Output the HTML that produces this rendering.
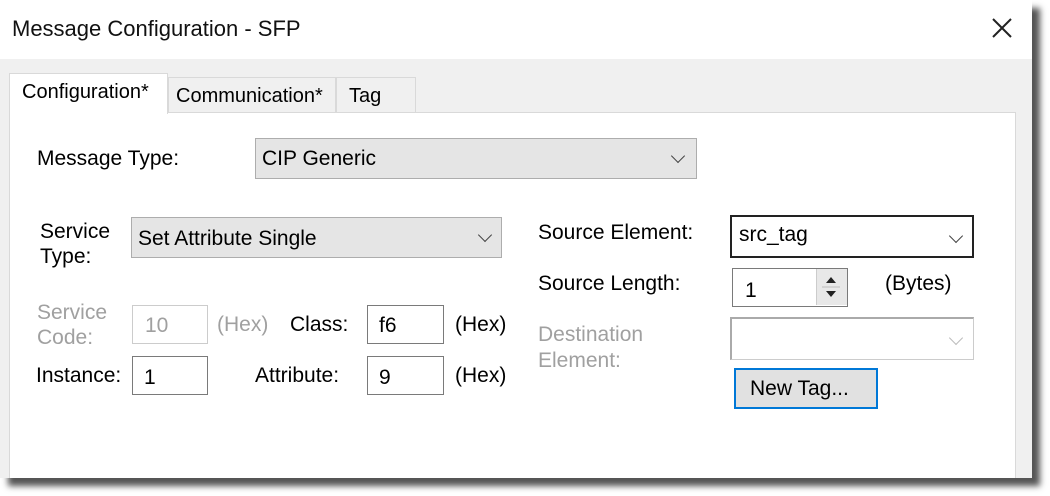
<!DOCTYPE html>
<html><head><style>
body{margin:0;width:1050px;height:496px;background:#fff;position:relative;overflow:hidden;font-family:"Liberation Sans",sans-serif;font-size:21px;color:#000}
.a{position:absolute;white-space:nowrap}
.box{position:absolute;box-sizing:border-box;background:#fff;border:1px solid #7a7a7a}
.cmb{position:absolute;box-sizing:border-box;background:#e5e5e5;border:1px solid #adadad}
.g{color:#a0a0a0}
.chev{position:absolute;width:9px;height:9px;border-right:1.5px solid #444;border-bottom:1.5px solid #444;transform:rotate(45deg)}
</style></head><body>
<div class="a" style="left:0;top:0;width:1032px;height:478px;background:#fff;box-shadow:8px 8px 6px #555"></div>
<div class="a" style="left:0;top:59px;width:1032px;height:419px;background:#f0f0f0"></div>
<div class="a" style="left:12px;top:16px;font-size:22px;color:#111">Message Configuration - SFP</div>
<svg class="a" style="left:991px;top:17px" width="22" height="22"><path d="M2 2L20 20M20 2L2 20" stroke="#222" stroke-width="2"/></svg>
<div class="a" style="left:9px;top:112px;width:1007px;height:366px;background:#fff;border:1px solid #d9d9d9;box-sizing:border-box;border-bottom:none"></div>
<div class="a" style="left:168px;top:77px;width:168px;height:36px;background:#f0f0f0;border:1px solid #d9d9d9;box-sizing:border-box"></div>
<div class="a" style="left:336px;top:77px;width:80px;height:36px;background:#f0f0f0;border:1px solid #d9d9d9;box-sizing:border-box"></div>
<div class="a" style="left:9px;top:73px;width:159px;height:41px;background:#fff;border:1px solid #d9d9d9;border-bottom:none;box-sizing:border-box"></div>
<div class="a" style="left:22px;top:81px;font-size:20px">Configuration*</div>
<div class="a" style="left:176px;top:85px;font-size:20px">Communication*</div>
<div class="a" style="left:349px;top:85px;font-size:20px">Tag</div>

<div class="a" style="left:37px;top:147px">Message Type:</div>
<div class="cmb" style="left:255px;top:138px;width:442px;height:41px"></div>
<div class="a" style="left:262px;top:147px">CIP Generic</div>
<div class="chev" style="left:673px;top:151px"></div>

<div class="a" style="left:40px;top:219px;line-height:25px">Service<br>Type:</div>
<div class="cmb" style="left:131px;top:217px;width:371px;height:41px"></div>
<div class="a" style="left:138px;top:227px">Set Attribute Single</div>
<div class="chev" style="left:480px;top:230px"></div>

<div class="a g" style="left:37px;top:300px;line-height:25px">Service<br>Code:</div>
<div class="box" style="left:132px;top:305px;width:76px;height:39px;border-color:#ccc"></div>
<div class="a g" style="left:145px;top:314px">10</div>
<div class="a g" style="left:217px;top:313px">(Hex)</div>
<div class="a" style="left:290px;top:313px">Class:</div>
<div class="box" style="left:367px;top:305px;width:77px;height:39px"></div>
<div class="a" style="left:379px;top:314px">f6</div>
<div class="a" style="left:455px;top:313px">(Hex)</div>

<div class="a" style="left:36px;top:364px">Instance:</div>
<div class="box" style="left:132px;top:356px;width:76px;height:39px"></div>
<div class="a" style="left:144px;top:366px">1</div>
<div class="a" style="left:255px;top:364px">Attribute:</div>
<div class="box" style="left:367px;top:356px;width:77px;height:39px"></div>
<div class="a" style="left:379px;top:366px">9</div>
<div class="a" style="left:455px;top:364px">(Hex)</div>

<div class="a" style="left:538px;top:221px">Source Element:</div>
<div class="box" style="left:730px;top:215px;width:244px;height:43px;border:2px solid #222"></div>
<div class="a" style="left:739px;top:223px">src_tag</div>
<div class="chev" style="left:951px;top:231px"></div>

<div class="a" style="left:538px;top:272px">Source Length:</div>
<div class="box" style="left:732px;top:268px;width:116px;height:39px"></div>
<div class="a" style="left:745px;top:279px">1</div>
<div class="a" style="left:816px;top:269px;width:30px;height:36px;background:#e8e8e8;border-left:1px solid #ccc"></div>
<svg class="a" style="left:820px;top:271px" width="22" height="32"><path d="M6 12L11 6L16 12Z M6 20L11 26L16 20Z" fill="#222"/><path d="M2 16H20" stroke="#bbb"/></svg>
<div class="a" style="left:885px;top:272px">(Bytes)</div>

<div class="a g" style="left:538px;top:322px;line-height:26px">Destination<br>Element:</div>
<div class="box" style="left:730px;top:317px;width:244px;height:43px;border:1px solid #ccc;border-top:2px solid #aaa;border-left:2px solid #aaa"></div>
<div class="chev" style="left:951px;top:333px;border-color:#bbb"></div>

<div class="a" style="left:734px;top:368px;width:144px;height:41px;box-sizing:border-box;background:#e1e1e1;border:2px solid #0078d7"></div>
<div class="a" style="left:750px;top:377px">New Tag...</div>
</body></html>
